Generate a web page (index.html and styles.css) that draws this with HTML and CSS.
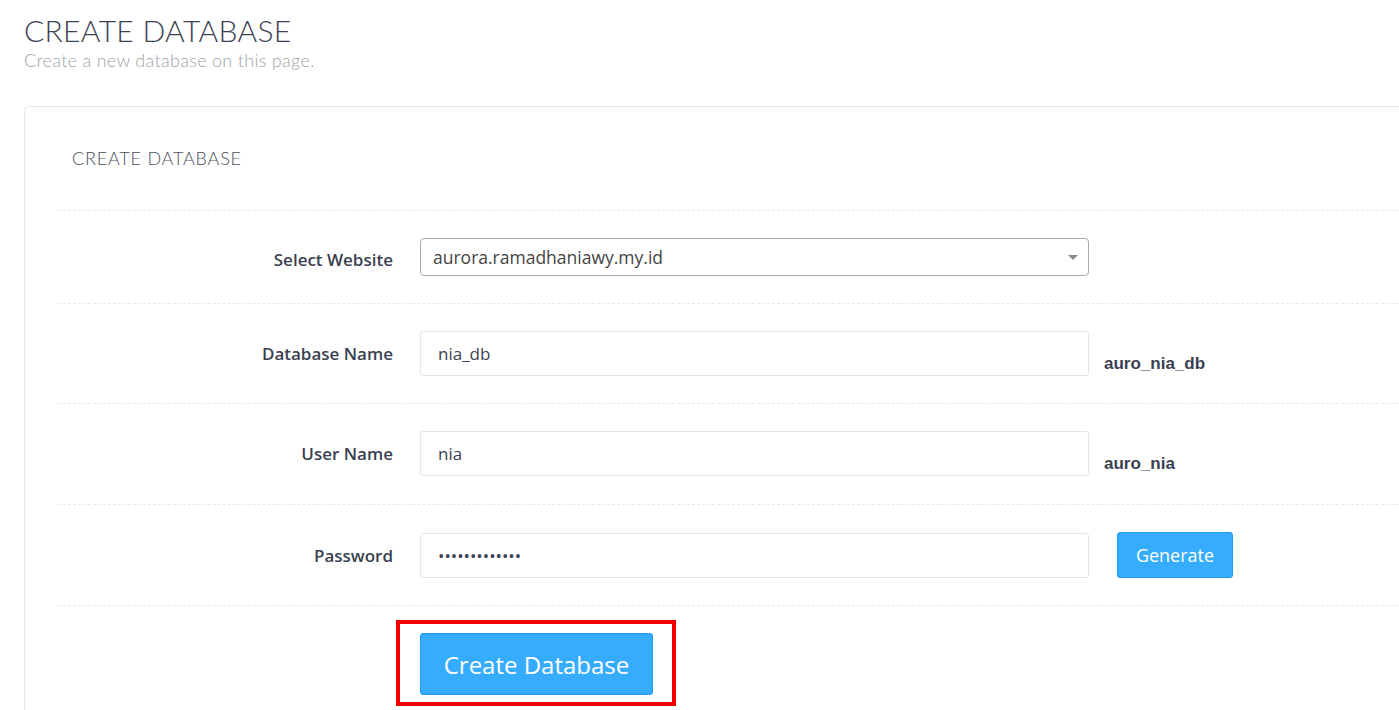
FILE: index.html
```html
<!DOCTYPE html>
<html lang="en">
<head>
    <meta charset="UTF-8">
    <title>Create Database</title>
    <link rel="stylesheet" href="styles.css">
</head>
<body>
    <div class="page">
        <div class="page-head">
            <h1>CREATE DATABASE</h1>
            <p class="subtitle">Create a new database on this page.</p>
        </div>

        <div class="card">
            <div class="card-title">CREATE DATABASE</div>

            <form class="db-form">
                <div class="form-row">
                    <label class="form-label label-select">Select Website</label>
                    <div class="select-box">
                        <span>aurora.ramadhaniawy.my.id</span>
                        <span class="caret"></span>
                    </div>
                </div>

                <div class="form-row">
                    <label class="form-label">Database Name</label>
                    <input class="form-input" type="text" value="nia_db">
                    <span class="suffix">auro_nia_db</span>
                </div>

                <div class="form-row row-user">
                    <label class="form-label">User Name</label>
                    <input class="form-input" type="text" value="nia">
                    <span class="suffix">auro_nia</span>
                </div>

                <div class="form-row">
                    <label class="form-label">Password</label>
                    <input class="form-input" type="password" value="aaaaaaaaaaaaa">
                    <button type="button" class="btn btn-generate">Generate</button>
                </div>

                <div class="form-actions">
                    <div class="highlight">
                        <button type="button" class="btn btn-create">Create Database</button>
                    </div>
                </div>
            </form>
        </div>
    </div>
</body>
</html>
```

FILE: styles.css
```css
* {
    margin: 0;
    padding: 0;
    box-sizing: border-box;
}

body {
    font-family: 'Open Sans', 'Noto Sans', sans-serif;
    background: #fff;
    color: #3a3f51;
    overflow: hidden;
}

.page {
    padding: 12px 0 0 24px;
}

.page-head h1 {
    font-family: Lato, 'Open Sans', sans-serif;
    font-weight: 300;
    font-size: 30px;
    line-height: 36px;
    color: #3c4252;
    letter-spacing: 0.3px;
}

.page-head .subtitle {
    font-family: Lato, 'Open Sans', sans-serif;
    font-weight: 300;
    font-size: 18px;
    line-height: 22px;
    color: #9fa2a8;
    letter-spacing: 0.3px;
    margin-top: 1px;
}

.card {
    margin-top: 35px;
    border: 1px solid #e2e8ef;
    border-right: none;
    border-bottom: none;
    border-radius: 5px 0 0 0;
    padding: 0 0 10px 33px;
}

.card-title {
    font-family: Lato, 'Open Sans', sans-serif;
    font-weight: 300;
    font-size: 18px;
    letter-spacing: 0.8px;
    color: #4a4f5c;
    padding: 40px 0 41px 14px;
    border-bottom: 1px dashed #e3e8ee;
}

.form-row {
    display: grid;
    grid-template-columns: 335px 669px auto;
    column-gap: 27px;
    align-items: center;
    padding: 27px 0;
    border-bottom: 1px dashed #e3e8ee;
}

.row-user {
    padding-bottom: 28px;
}

.form-label {
    text-align: right;
    font-weight: 600;
    font-size: 17px;
    color: #3a3f51;
}

.label-select {
    padding-top: 4px;
}

.select-box {
    height: 38px;
    border: 1px solid #aaa;
    border-radius: 4px;
    display: flex;
    align-items: center;
    justify-content: space-between;
    padding: 0 10px 0 12px;
    font-size: 17.5px;
    color: #444;
}

.caret {
    width: 0;
    height: 0;
    border-left: 5px solid transparent;
    border-right: 5px solid transparent;
    border-top: 5px solid #888;
}

.form-input {
    height: 45px;
    border: 1px solid #e1e6ee;
    border-radius: 3px;
    padding: 0 17px;
    font-family: 'Open Sans', sans-serif;
    font-size: 17px;
    color: #3a3f51;
    outline: none;
}

.suffix {
    font-family: 'Liberation Sans', Arial, sans-serif;
    font-weight: bold;
    font-size: 17px;
    color: #3a3f51;
    margin-left: -12px;
    padding-top: 20px;
}

.btn {
    font-family: 'Open Sans', sans-serif;
    color: #fff;
    background: #36acff;
    border: 1px solid #1d9cf2;
    border-radius: 3px;
    cursor: pointer;
}

.btn-generate {
    justify-self: start;
    margin-left: 1px;
    width: 116px;
    height: 46px;
    font-size: 18px;
}

.form-actions {
    padding: 14px 0 0 338px;
}

.highlight {
    display: inline-block;
    border: 4px solid #f50000;
    padding: 9px 19px 7px 20px;
}

.btn-create {
    display: block;
    width: 233px;
    height: 62px;
    font-size: 24px;
}
```
